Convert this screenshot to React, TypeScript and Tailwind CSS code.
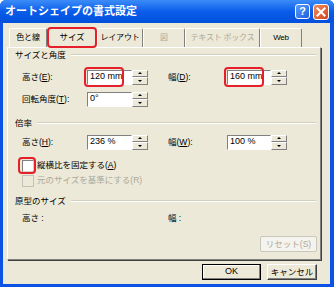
import React from "react";

const FONT = "font-['Liberation_Sans','Noto_Sans_CJK_JP',sans-serif]";

function Spinner() {
  return (
    <div className="flex flex-col w-[16px] h-full">
      <div className="flex-1 flex items-center justify-center bg-[#ece9d8] border border-t-white border-l-white border-r-[#808080] border-b-[#808080]">
        <span className="w-0 h-0 border-x-[2px] border-x-transparent border-b-[2px] border-b-black" />
      </div>
      <div className="flex-1 flex items-center justify-center bg-[#ece9d8] border border-t-white border-l-white border-r-[#808080] border-b-[#808080]">
        <span className="w-0 h-0 border-x-[2px] border-x-transparent border-t-[2px] border-t-black" />
      </div>
    </div>
  );
}

function NumInput({ value, width, mark }: { value: string; width: number; mark?: boolean }) {
  return (
    <div className="relative flex h-[15px]" style={{ width }}>
      <div className="flex-1 bg-white border border-t-[#808080] border-l-[#808080] border-b-white border-r-white flex items-center pl-[2px] text-[9px] text-black">
        {value}
      </div>
      <Spinner />
      {mark && (
        <span className="absolute left-[-3px] top-[-3px] w-[40px] h-[20px] border-2 border-[#e5202a] rounded-[4px]" />
      )}
    </div>
  );
}

function GroupHeader({ label }: { label: string }) {
  return (
    <div className="flex items-center h-[14px] pl-[7px] pr-[4px]">
      <span className="text-[8.5px] text-black leading-none">{label}</span>
      <span className="flex-1 ml-[5px] border-t border-t-[#d0d0bf] border-b border-b-white" />
    </div>
  );
}

function Label({ children, w }: { children: React.ReactNode; w: number }) {
  return (
    <span className="text-[8.5px] text-black leading-none shrink-0" style={{ width: w }}>
      {children}
    </span>
  );
}

function Tab({ label, w, selected, disabled }: { label: string; w: number; selected?: boolean; disabled?: boolean }) {
  if (selected) {
    return (
      <div
        className="relative h-[21px] -mb-[1px] z-10 flex items-center justify-center bg-[#ece9d8] border-2 border-[#e5202a] rounded-[4px] text-[8.5px] text-black"
        style={{ width: w }}
      >
        {label}
      </div>
    );
  }
  return (
    <div
      className={`h-[19px] flex items-center justify-center whitespace-nowrap bg-[#ece9d8] border-t border-l border-t-white border-l-white border-r border-r-[#808080] rounded-t-[2px] text-[8px] tracking-[-0.2px] ${
        disabled ? "text-[#aca899]" : "text-black"
      }`}
      style={{ width: w }}
    >
      {label}
    </div>
  );
}

function Checkbox({ label, mark, disabled }: { label: React.ReactNode; mark?: boolean; disabled?: boolean }) {
  return (
    <div className="flex items-center h-[13px] pl-[14px]">
      <div className="relative">
        <div
          className={`w-[12px] h-[12px] border ${
            disabled ? "bg-[#ece9d8] border-[#c4c2b8]" : "bg-white border-t-[#808080] border-l-[#808080] border-b-[#d4d0c8] border-r-[#d4d0c8]"
          }`}
        />
        {mark && (
          <span className="absolute left-[-4px] top-[-3px] w-[18px] h-[17px] border-2 border-[#e5202a] rounded-[4px]" />
        )}
      </div>
      <span className={`ml-[3px] text-[8.5px] leading-none ${disabled ? "text-[#aca899]" : "text-black"}`}>
        {label}
      </span>
    </div>
  );
}

export default function App() {
  return (
    <div className={`w-[334px] h-[287px] bg-[#0a53e4] rounded-t-[6px] flex flex-col overflow-hidden ${FONT}`}>
      {/* title bar */}
      <div className="h-[23px] shrink-0 flex items-center pl-[5px] pr-[5px] bg-gradient-to-b from-[#3b8cf8] via-[#0a5ce9] to-[#0250dc]">
        <span className="text-white font-bold text-[11px] leading-none">
          オートシェイプの書式設定
        </span>
        <div className="ml-auto flex items-center gap-[3px]">
          <div className="w-[15px] h-[15px] rounded-[3px] border border-white bg-gradient-to-br from-[#5a9cff] to-[#1f5fdc] flex items-center justify-center text-white text-[11px] font-bold leading-none">
            ?
          </div>
          <div className="w-[16px] h-[16px] rounded-[3px] border border-white bg-gradient-to-br from-[#f08a60] to-[#d2421a] flex items-center justify-center">
            <svg width="10" height="10" viewBox="0 0 10 10">
              <path d="M1.5 1.5 L8.5 8.5 M8.5 1.5 L1.5 8.5" stroke="white" strokeWidth="2" strokeLinecap="square" />
            </svg>
          </div>
        </div>
      </div>

      {/* client */}
      <div className="flex-1 ml-[3px] mr-[4px] mb-[3px] bg-[#ece9d8] flex flex-col pl-[4px] pr-[9px]">
        {/* tabs */}
        <div className="flex items-end h-[24px] pl-[2px]">
          <Tab label="色と線" w={38} />
          <Tab label="サイズ" w={50} selected />
          <Tab label="レイアウト" w={46} />
          <Tab label="図" w={42} disabled />
          <Tab label="テキスト ボックス" w={75} disabled />
          <Tab label="Web" w={42} />
        </div>

        {/* panel */}
        <div className="flex flex-col h-[213px] border border-t-white border-l-white border-r-[#808080] border-b-[#808080] shadow-[1px_1px_0_#404040]">
          <GroupHeader label="サイズと角度" />
          <div className="flex items-center h-[16px] mt-[7px] pl-[14px]">
            <Label w={65}>
              高さ(<u>E</u>):
            </Label>
            <NumInput value="120 mm" width={61} mark />
            <span className="w-[20px]" />
            <Label w={59}>
              幅(<u>D</u>):
            </Label>
            <NumInput value="160 mm" width={60} mark />
          </div>
          <div className="flex items-center h-[16px] mt-[6px] pl-[14px]">
            <Label w={65}>
              回転角度(<u>T</u>):
            </Label>
            <NumInput value="0°" width={61} />
          </div>

          <div className="mt-[9px]">
            <GroupHeader label="倍率" />
          </div>
          <div className="flex items-center h-[16px] mt-[4px] pl-[14px]">
            <Label w={65}>
              高さ(<u>H</u>):
            </Label>
            <NumInput value="236 %" width={61} />
            <span className="w-[20px]" />
            <Label w={59}>
              幅(<u>W</u>):
            </Label>
            <NumInput value="100 %" width={60} />
          </div>
          <div className="mt-[9px]">
            <Checkbox
              mark
              label={
                <>
                  縦横比を固定する(<u>A</u>)
                </>
              }
            />
          </div>
          <div className="mt-[2px]">
            <Checkbox disabled label="元のサイズを基準にする(R)" />
          </div>

          <div className="mt-[7px]">
            <GroupHeader label="原型のサイズ" />
          </div>
          <div className="flex items-center h-[12px] mt-[4px] pl-[14px]">
            <Label w={146}>高さ :</Label>
            <Label w={40}>幅 :</Label>
          </div>
          <div className="flex justify-end mt-[12px] pr-[3px]">
            <div className="w-[57px] h-[16px] flex items-center justify-center border border-[#c9c7ba] rounded-[2px] bg-[#f4f3ee] text-[8.5px] text-[#aca899]">
              リセット(S)
            </div>
          </div>
        </div>

        {/* dialog buttons */}
        <div className="flex justify-end gap-[6px] mt-[4px] pr-[4px]">
          <div className="w-[59px] h-[16px] flex items-center justify-center border border-black bg-[#ece9d8] shadow-[inset_-1px_-1px_0_#808080,inset_1px_1px_0_white] text-[9px] text-black">
            OK
          </div>
          <div className="w-[50px] h-[16px] flex items-center justify-center border border-t-white border-l-white border-r-[#404040] border-b-[#404040] bg-[#ece9d8] shadow-[inset_-1px_-1px_0_#808080] text-[8.5px] text-black">
            キャンセル
          </div>
        </div>
      </div>
    </div>
  );
}
